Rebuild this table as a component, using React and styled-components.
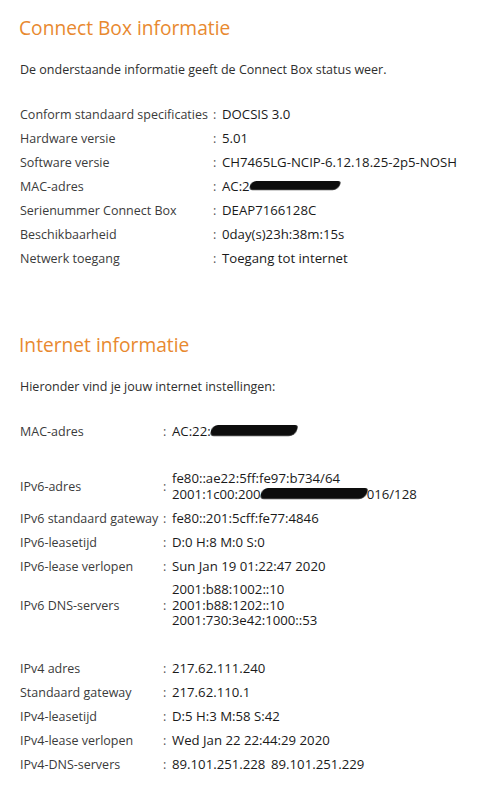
import React from "react";
import styled, { createGlobalStyle } from "styled-components";

const GlobalStyle = createGlobalStyle`
  body {
    margin: 0;
    background: #ffffff;
    font-family: "Open Sans", "Noto Sans", sans-serif;
    color: #333333;
  }
`;

const Page = styled.div`
  padding: 13px 20px 20px 20px;
  width: 478px;
  box-sizing: border-box;
`;

const Section = styled.section`
  margin-bottom: ${(p) => p.$gap || 0}px;
`;

const Title = styled.h2`
  margin: 0 0 0 -1px;
  font-size: 19.2px;
  font-weight: 400;
  line-height: 30px;
  color: #e8892f;
`;

const Intro = styled.p`
  margin: 15px 0 20px 0;
  font-size: 12.5px;
  line-height: 24px;
  color: #2e2e2e;
`;

const Grid = styled.div`
  display: grid;
  grid-template-columns: ${(p) => p.$label}px 9px auto;
  align-items: center;
  font-size: 12.5px;
`;

const Label = styled.div`
  padding: 4.5px 0;
  line-height: 15px;
  color: #3b3b3b;
  white-space: nowrap;
`;

const Colon = styled.div`
  line-height: 15px;
  color: #555555;
`;

const Value = styled.div`
  padding: ${(p) => (p.$multi ? "4px" : "4.5px")} 0;
  line-height: ${(p) => (p.$multi ? "15.5px" : "15px")};
  font-size: 13.2px;
  color: #1a1a1a;
  white-space: nowrap;
`;

const Spacer = styled.div`
  grid-column: 1 / -1;
  height: 24px;
`;

const Blot = styled.span`
  display: inline-block;
  vertical-align: middle;
  width: ${(p) => p.$w}px;
  height: ${(p) => p.$h || 10}px;
  margin-top: -2px;
  background: #0d0d0d;
  border-radius: 6px 3px 7px 4px;
  filter: blur(0.7px);
  transform: skewX(-12deg);
`;

const Wide = styled.span`
  display: inline-block;
  width: ${(p) => p.$w}px;
`;

const boxRows = [
  ["Conform standaard specificaties", "DOCSIS 3.0"],
  ["Hardware versie", "5.01"],
  ["Software versie", "CH7465LG-NCIP-6.12.18.25-2p5-NOSH"],
  ["MAC-adres", <>AC:2<Blot $w={90} $h={9} /></>],
  ["Serienummer Connect Box", "DEAP7166128C"],
  ["Beschikbaarheid", "0day(s)23h:38m:15s"],
  ["Netwerk toegang", "Toegang tot internet"],
];

const netRows = [
  ["MAC-adres", <>AC:22:<Blot $w={86} $h={11} /></>],
  null,
  [
    "IPv6-adres",
    <>
      fe80::ae22:5ff:fe97:b734/64
      <br />
      2001:1c00:200<Blot $w={106} $h={11} />016/128
    </>,
    true,
  ],
  ["IPv6 standaard gateway", "fe80::201:5cff:fe77:4846"],
  ["IPv6-leasetijd", "D:0 H:8 M:0 S:0"],
  ["IPv6-lease verlopen", "Sun Jan 19 01:22:47 2020"],
  [
    "IPv6 DNS-servers",
    <>
      2001:b88:1002::10
      <br />
      2001:b88:1202::10
      <br />
      2001:730:3e42:1000::53
    </>,
    true,
  ],
  null,
  ["IPv4 adres", "217.62.111.240"],
  ["Standaard gateway", "217.62.110.1"],
  ["IPv4-leasetijd", "D:5 H:3 M:58 S:42"],
  ["IPv4-lease verlopen", "Wed Jan 22 22:44:29 2020"],
  ["IPv4-DNS-servers", <><Wide $w={99}>89.101.251.228</Wide>89.101.251.229</>],
];

function InfoGrid({ rows, label }) {
  return (
    <Grid $label={label}>
      {rows.map((row, i) =>
        row ? (
          <React.Fragment key={i}>
            <Label>{row[0]}</Label>
            <Colon>:</Colon>
            <Value $multi={row[2]}>{row[1]}</Value>
          </React.Fragment>
        ) : (
          <Spacer key={i} />
        )
      )}
    </Grid>
  );
}

export default function App() {
  return (
    <>
      <GlobalStyle />
      <Page>
        <Section $gap={60}>
          <Title>Connect Box informatie</Title>
          <Intro>De onderstaande informatie geeft de Connect Box status weer.</Intro>
          <InfoGrid rows={boxRows} label={193} />
        </Section>
        <Section>
          <Title>Internet informatie</Title>
          <Intro>Hieronder vind je jouw internet instellingen:</Intro>
          <InfoGrid rows={netRows} label={143} />
        </Section>
      </Page>
    </>
  );
}
